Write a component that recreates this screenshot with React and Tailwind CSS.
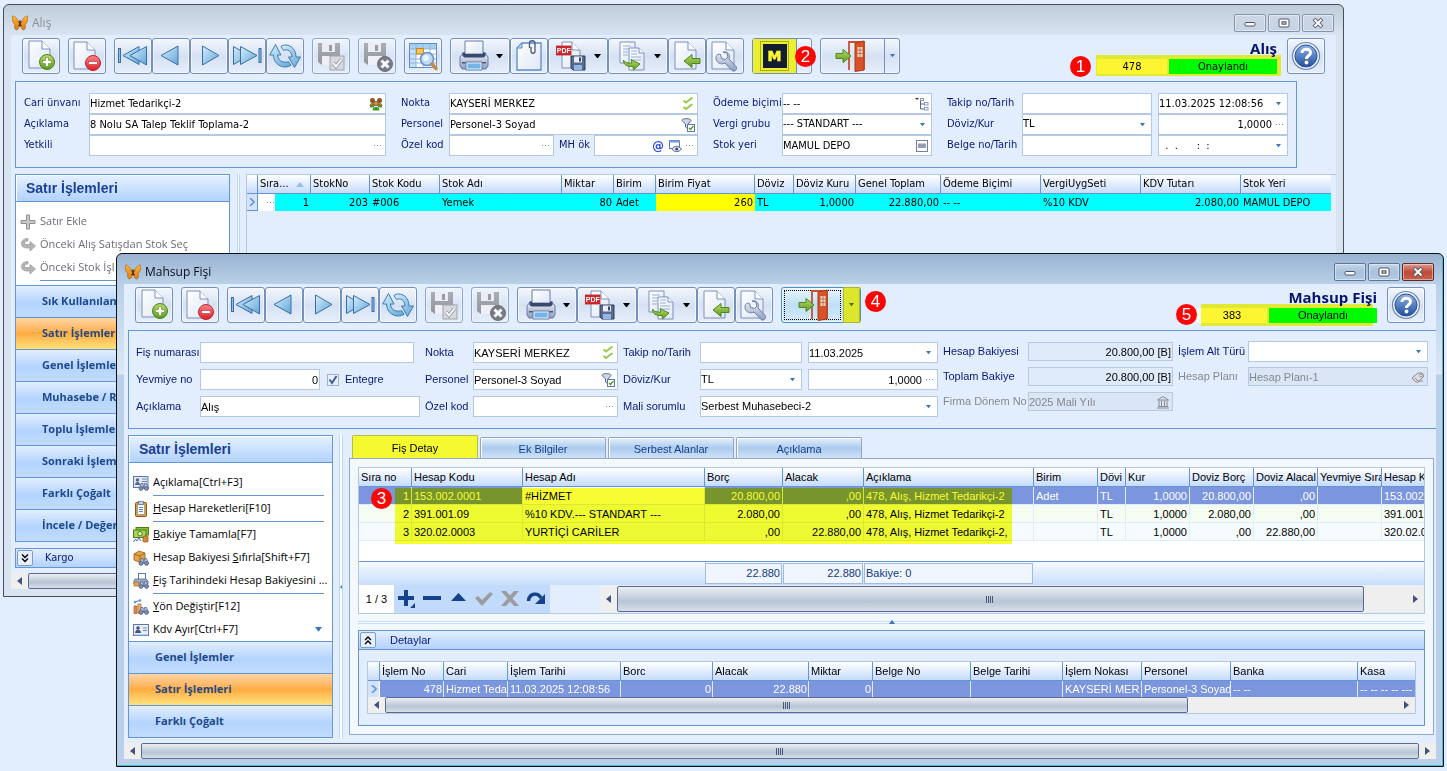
import React, { useId } from "react";

/* ---------- shared drawing helpers ---------- */

function Defs() {
  return (
    <svg className="absolute size-0" aria-hidden="true">
      <defs>
        <linearGradient id="gPage" x1="0" y1="0" x2="1" y2="1">
          <stop offset="0" stopColor="#ffffff" />
          <stop offset="1" stopColor="#dde7f6" />
        </linearGradient>
        <linearGradient id="gNav" x1="0" y1="0" x2="1" y2="1">
          <stop offset="0" stopColor="#d8eefb" />
          <stop offset="1" stopColor="#5fa6d8" />
        </linearGradient>
        <linearGradient id="gGreen" x1="0" y1="0" x2="0" y2="1">
          <stop offset="0" stopColor="#b8dc6c" />
          <stop offset="1" stopColor="#5d9a1c" />
        </linearGradient>
        <linearGradient id="gRed" x1="0" y1="0" x2="0" y2="1">
          <stop offset="0" stopColor="#f9868a" />
          <stop offset="1" stopColor="#dd1f28" />
        </linearGradient>
        <linearGradient id="gHelp" x1="0" y1="0" x2="0" y2="1">
          <stop offset="0" stopColor="#8fb2e6" />
          <stop offset="1" stopColor="#20509e" />
        </linearGradient>
        <linearGradient id="gSteel" x1="0" y1="0" x2="0" y2="1">
          <stop offset="0" stopColor="#eef2f9" />
          <stop offset="1" stopColor="#8d9cbd" />
        </linearGradient>
        <linearGradient id="gGray" x1="0" y1="0" x2="0" y2="1">
          <stop offset="0" stopColor="#99999d" />
          <stop offset="1" stopColor="#77777b" />
        </linearGradient>
        <linearGradient id="gOrange" x1="0" y1="0" x2="0" y2="1">
          <stop offset="0" stopColor="#ffb52e" />
          <stop offset="1" stopColor="#e07c10" />
        </linearGradient>
      </defs>
    </svg>
  );
}

function Icon({ children, size = "size-8", box = "0 0 32 32" }) {
  return (
    <svg viewBox={box} className={`${size} shrink-0`} fill="none" aria-hidden="true">
      {children}
    </svg>
  );
}

const Page = ({ x = 4, y = 1, w = 21, h = 27 }) => (
  <>
    <path
      d={`M${x} ${y}h${w - 8}l8 8v${h - 8}h-${w}z`}
      fill="url(#gPage)"
      stroke="#7d90bd"
      strokeWidth="1"
    />
    <path d={`M${x + w - 8} ${y}v8h8`} fill="#fff" stroke="#7d90bd" strokeWidth="1" />
  </>
);

const GreenArrow = ({ d }) => (
  <path d={d} fill="url(#gGreen)" stroke="#4f8420" strokeWidth="1" strokeLinejoin="round" />
);

const icons = {
  add: (
    <Icon>
      <Page />
      <circle cx="22" cy="22" r="7.5" fill="url(#gGreen)" stroke="#4d801a" />
      <path d="M20.5 17.5h3v3h3v3h-3v3h-3v-3h-3v-3h3z" fill="#fff" stroke="#5d8c28" strokeWidth=".6" />
    </Icon>
  ),
  remove: (
    <Icon>
      <Page x={3} y={2} />
      <circle cx="22" cy="23" r="7.5" fill="url(#gRed)" stroke="#c0242c" />
      <rect x="17.5" y="21.5" width="9" height="3" fill="#fff" stroke="#c02a2e" strokeWidth=".6" />
    </Icon>
  ),
  first: (
    <Icon>
      <rect x="1.5" y="8.5" width="2" height="14" fill="#8cc0e4" stroke="#3c6ea6" />
      <path d="M6 15.5 22 6.5v18z" fill="url(#gNav)" stroke="#3c6ea6" />
      <path d="M13 15.5 29.500 6.500v18.500z" fill="url(#gNav)" stroke="#3c6ea6" />
    </Icon>
  ),
  prev: (
    <Icon>
      <path d="M6 15.500 23 6v19z" fill="url(#gNav)" stroke="#3c6ea6" />
    </Icon>
  ),
  next: (
    <Icon>
      <path d="M26 15.500 9.500 6v19z" fill="url(#gNav)" stroke="#3c6ea6" />
    </Icon>
  ),
  last: (
    <Icon>
      <path d="M18 15.500 2.500 6.500v18z" fill="url(#gNav)" stroke="#3c6ea6" />
      <path d="M26 15.500 9.500 6.500v18z" fill="url(#gNav)" stroke="#3c6ea6" />
      <rect x="28" y="8.500" width="2" height="14" fill="#8cc0e4" stroke="#3c6ea6" />
    </Icon>
  ),
  refresh: (
    <Icon>
      <path
        d="M8.500 15H12L6.500 4.500 .700 15H4.500C4.500 22 10 27 16 27c2.500 0 4.500-.700 6-1.800L19.500 21.500C17 23 9 22.500 8.500 15z"
        fill="url(#gNav)"
        stroke="#3f7cb0"
        strokeLinejoin="round"
      />
      <path
        d="M12 6.500C13.500 5.300 15 5 16.500 5c6 0 10.500 5 10.500 12h4.500L25.500 27.500 19.500 17H23c0-6-5-8.500-8.500-6.500z"
        fill="url(#gNav)"
        stroke="#3f7cb0"
        strokeLinejoin="round"
      />
    </Icon>
  ),
  save: (
    <Icon>
      <path d="M3 3h22v22H7l-4-3z" fill="url(#gGray)" />
      <rect x="7" y="3" width="13" height="9" fill="#ededf0" />
      <rect x="14" y="5" width="3" height="6" fill="#828286" />
      <rect x="7" y="16" width="14" height="9" fill="#f2f2f4" />
      <rect x="15" y="16" width="14" height="14" fill="#d2d3d6" stroke="#8d8d92" />
      <path d="m18 23 3 3.500 5.500-7" stroke="#77777b" strokeWidth="3.600" />
      <path d="m18 23 3 3.500 5.500-7" stroke="#fff" strokeWidth="2" />
    </Icon>
  ),
  cancel: (
    <Icon>
      <path d="M3 3h22v22H7l-4-3z" fill="url(#gGray)" />
      <rect x="7" y="3" width="13" height="9" fill="#ededf0" />
      <rect x="14" y="5" width="3" height="6" fill="#828286" />
      <rect x="7" y="16" width="14" height="9" fill="#f2f2f4" />
      <circle cx="24" cy="24" r="7.500" fill="#55565a" stroke="#4a4a4e" />
      <path d="m20.500 20.500 7 7m0-7-7 7" stroke="#fff" strokeWidth="3" />
    </Icon>
  ),
  sheet: (
    <Icon>
      <rect x="2.500" y="3.500" width="27" height="24" fill="#fff" stroke="#5f8fca" />
      <path d="M3 4h26v5H3z" fill="#a5d0ee" />
      <path d="M3 9h6v18H3z" fill="#c3e0f5" />
      <path d="M3 9h26M3 14h26M3 19h26M3 23h26M9 4v23M16 4v23M23 4v23" stroke="#8fb4dd" />
      <rect x="9.500" y="8.500" width="7" height="5.500" fill="#f8c45a" stroke="#c98a1c" />
      <circle cx="20" cy="19" r="6.500" fill="#b9daf8" fillOpacity=".9" stroke="#6f8fc8" strokeWidth="1.600" />
      <circle cx="19" cy="18" r="3" fill="#e9f5ff" />
      <path d="m25 24 4 4.500" stroke="#c58a4a" strokeWidth="3.400" strokeLinecap="round" />
    </Icon>
  ),
  print: (
    <Icon>
      <path d="M5 13h22l3 4v9l-2 3H4l-2-3v-9z" fill="url(#gSteel)" stroke="#6b7ca6" />
      <path d="M7 1h18v13H7z" fill="url(#gPage)" stroke="#6b7ca6" />
      <path d="M4.500 12.500H7V14h18v-1.500h2.500V16l-2 1.500h-19l-2-1.500z" fill="#39476f" />
      <path d="M4 22h24v1.500H4z" fill="#4a587c" />
      <path d="M8 22h16v8H8z" fill="#eaf6ff" stroke="#6b7ca6" />
      <path d="M9.500 23.500h13v5h-13z" fill="#72b6e8" />
    </Icon>
  ),
  clip: (
    <Icon>
      <path d="M9 3h19v27H4V8z" fill="url(#gPage)" stroke="#5c8bc8" strokeWidth="1.300" />
      <path d="M4 8h5V3z" fill="#bcd8f2" stroke="#5c8bc8" />
      <path d="M18 7v4c0 3 4 3 4 0V3c0-3-5.500-3-5.500 0v5" stroke="#4b5878" strokeWidth="1.300" />
    </Icon>
  ),
  pdf: (
    <Icon>
      <Page x={6} y={2} w={18} h={26} />
      <rect x="0" y="6" width="15" height="9" fill="#d3262c" stroke="#b3262c" strokeWidth=".800" />
      <text x="0.800" y="13.200" fontSize="7" fontWeight="700" fill="#fff" fontFamily="Liberation Sans">
        PDF
      </text>
      <path d="M15 16h14v14H17l-2-2z" fill="#5b6a8e" stroke="#2f3b5b" />
      <rect x="18" y="16.500" width="8" height="6" fill="#e8eef8" />
      <rect x="23" y="17.500" width="2" height="4" fill="#39456a" />
      <rect x="18" y="25" width="8" height="5" fill="#8fb8e6" />
    </Icon>
  ),
  copy: (
    <Icon>
      <path d="M4 2h15v21H4z" fill="url(#gPage)" stroke="#7d90bd" />
      <path d="M7 6h8M7 9h6M7 12h5M7 15h5" stroke="#9aaedb" />
      <path d="M13 8h10l5 5v17H13z" fill="url(#gPage)" stroke="#7d90bd" />
      <path d="M23 8v5h5" fill="#fff" stroke="#7d90bd" />
      <path d="M15 11h6M15 14h6M15 17h10M15 20h10" stroke="#9aaedb" />
      <GreenArrow d="M7.500 20c1 2.500 4 3.500 8.500 3l-1-3.500L24 24l-6.500 6-.500-3.500C11 27 7 24.500 7.500 20z" />
    </Icon>
  ),
  fetch: (
    <Icon>
      <Page x={4} y={2} w={21} h={27} />
      <GreenArrow d="m13 21 8-6.500v4h8v5h-8v4z" />
    </Icon>
  ),
  wrench: (
    <Icon>
      <Page x={3} y={2} w={22} h={27} />
      <path
        d="M14 12l4 1 1 4-2.500 2.500-4-1-1-4C8 13 6 17 7.500 20.500 9.500 24 13 24.500 16 23l7 7.500c2.500 2 6-1.500 4-4L20 19c1.500-4-1-8-6-7z"
        fill="url(#gSteel)"
        stroke="#6b7aa0"
        strokeWidth="1"
        strokeLinejoin="round"
      />
    </Icon>
  ),
  mark: (
    <Icon>
      <rect x="1.500" y="1.500" width="28" height="29" stroke="#a9ae18" />
      <rect x="4" y="4" width="24" height="24" fill="#141c30" />
      <text x="15.500" y="21" textAnchor="middle" fontSize="14" fontWeight="700" fill="#fbf630" stroke="#fbf630" strokeWidth=".6" fontFamily="DejaVu Sans">
        M
      </text>
    </Icon>
  ),
  exit: (
    <Icon>
      <path d="M15 30V2h15v28" stroke="#c8502e" strokeWidth="1.800" />
      <path d="M21 3 30 1v29l-9 1.500z" fill="#d9532a" stroke="#a83a18" />
      <path d="M23.500 7h5v10h-5z" fill="#f3d8c2" />
      <path d="M26 7v10M23.500 10h5M23.500 13.500h5" stroke="#a5532e" strokeWidth=".700" />
      <GreenArrow d="M2 13.500h7v-4l8 6.500-8 6.500v-4H2z" />
    </Icon>
  ),
  help: (
    <Icon>
      <circle cx="16" cy="16" r="13.500" fill="#e9f1fc" stroke="#6f86b6" strokeWidth="1.200" />
      <circle cx="16" cy="16" r="11" fill="url(#gHelp)" stroke="#2c5396" />
      <path d="M12 13c0-5 8.500-5 8.500-.500 0 3.500-4 3-4 6.500" stroke="#fff" strokeWidth="3" />
      <circle cx="16.500" cy="22.500" r="1.900" fill="#fff" />
    </Icon>
  ),
};

const Butterfly = () => (
  <Icon size="size-4" box="0 0 16 16">
    <path d="M7.500 8.500C6 4 3 1 .300 1 0 5 1 8.500 3 9.300 2 11.500 2.500 14.500 4.500 15 6.500 14.500 7.300 12 7.500 9z" fill="url(#gOrange)" stroke="#9a5210" strokeWidth=".500" />
    <path d="M8.500 8.500C10 4 13 1 15.700 1 16 5 15 8.500 13 9.300c1 2.200.500 5.200-1.500 5.700-2-.500-2.800-3-3-6z" fill="url(#gOrange)" stroke="#9a5210" strokeWidth=".500" />
    <path d="M8 5.500v6" stroke="#3a2614" strokeWidth="1.600" />
    <path d="m6 6.500 2 2 2-2M6 11l2-2 2 2" stroke="#5a3614" strokeWidth=".800" />
  </Icon>
);

const Bino = () => (
  <>
    <path d="M6.500 13.500 8 8.500h2l.500 5zM11 13.500l.500-5h2l2 5z" fill="#b9c3d8" stroke="#55658c" strokeWidth=".800" />
    <circle cx="8" cy="13.500" r="1.900" fill="#8193b8" stroke="#44537a" strokeWidth=".700" />
    <circle cx="13.500" cy="13.500" r="1.900" fill="#8193b8" stroke="#44537a" strokeWidth=".700" />
  </>
);

const small = {
  plus: (
    <Icon size="size-4" box="0 0 16 16">
      <path d="M6.500 1h3v5.500H15v3H9.500V15h-3V9.500H1v-3h5.500z" fill="#c9c9c9" stroke="#8f8f8f" />
    </Icon>
  ),
  redo: (
    <Icon size="size-4" box="0 0 16 16">
      <path d="M8 1.500C-.500 1.500-.500 11 6.500 11H10v3l5.500-5L10 4.500V7.500H7C3.500 7.500 3.500 4.500 8 4z" fill="#b4b4b4" stroke="#9a9a9a" strokeWidth=".700" />
    </Icon>
  ),
  cardFind: (
    <Icon size="size-4" box="0 0 16 16">
      <rect x=".500" y="1.500" width="14.500" height="11" fill="#dfe7f4" stroke="#5a79b0" />
      <circle cx="4.500" cy="5" r="1.700" fill="#55658c" />
      <path d="M2 10c0-4 5-4 5 0z" fill="#55658c" />
      <path d="M9 4h5M9 6.500h5" stroke="#6f86b6" />
      <Bino />
    </Icon>
  ),
  clipboard: (
    <Icon size="size-4" box="0 0 16 16">
      <rect x="2.500" y="1.500" width="11" height="14" rx="1" fill="#e09a2c" stroke="#8d5a12" />
      <rect x="4.500" y="3.500" width="7" height="10" fill="#fff" stroke="#7d93bd" strokeWidth=".700" />
      <rect x="5.500" y=".500" width="5" height="3" fill="#c9d2e4" stroke="#596a92" strokeWidth=".700" />
      <path d="M6 6.500h4M6 8.500h4M6 10.500h4" stroke="#5e86c6" />
    </Icon>
  ),
  money: (
    <Icon size="size-4" box="0 0 16 16">
      <rect x="3" y=".500" width="12.500" height="7.500" fill="#8cbf3a" stroke="#4b7c18" />
      <rect x=".500" y="3" width="12.500" height="7.500" fill="#a9d455" stroke="#4b7c18" />
      <circle cx="7" cy="6.700" r="2.200" fill="#e6f5c2" stroke="#4b7c18" />
      <path d="m.500 15 2-3 1.500 2 2-3 2 3" stroke="#3c74c0" />
      <rect x="10" y="9" width="5" height="6" rx="1" fill="#d98a3c" stroke="#8d4e16" strokeWidth=".700" />
    </Icon>
  ),
  box: (
    <Icon size="size-4" box="0 0 16 16">
      <path d="m1 4 5-3 6 2v6l-5 3.500L1 10z" fill="#e3a443" stroke="#96601a" strokeWidth=".800" />
      <path d="m1 4 6 2v6.500M7 6l5-3" stroke="#96601a" strokeWidth=".800" />
      <Bino />
    </Icon>
  ),
  printFind: (
    <Icon size="size-4" box="0 0 16 16">
      <rect x="5.500" y=".500" width="7" height="6" fill="#fff" stroke="#5a79b0" />
      <path d="M2 6h11l2 2v3H1V7.500z" fill="#9fb0d2" stroke="#55658c" strokeWidth=".800" />
      <rect x="1" y="9" width="5" height="4" fill="#e3a05a" stroke="#96601a" strokeWidth=".600" />
      <Bino />
    </Icon>
  ),
  chart: (
    <Icon size="size-4" box="0 0 16 16">
      <path d="m2 3 3-1 2-1" stroke="#3c74c0" />
      <circle cx="2" cy="3" r="1.300" fill="#5e9ae0" />
      <circle cx="7" cy="1.500" r="1.300" fill="#5e9ae0" />
      <rect x="1" y="7" width="3" height="7.500" fill="#e08a4a" stroke="#96501a" strokeWidth=".600" />
      <rect x="5" y="5" width="3" height="9.500" fill="#eeb27c" stroke="#96501a" strokeWidth=".600" />
      <Bino />
    </Icon>
  ),
  card: (
    <Icon size="size-4" box="0 0 16 16">
      <rect x=".500" y="2.500" width="15" height="11" fill="#e8effa" stroke="#5a79b0" />
      <circle cx="5" cy="6" r="1.800" fill="#44537a" />
      <path d="M2 11c0-4.500 6-4.500 6 0z" fill="#44537a" />
      <path d="M10 6h4M10 8.500h4" stroke="#6f86b6" />
      <path d="M1 13h14" stroke="#88aee6" />
    </Icon>
  ),
  people: (
    <Icon size="size-3.5" box="0 0 14 14">
      <circle cx="3.500" cy="3.500" r="2.500" fill="#8a5426" />
      <circle cx="10.500" cy="3.500" r="2.500" fill="#8a5426" />
      <path d="M.500 9c0-4 6-4 6 0zM7.500 9c0-4 6-4 6 0z" fill="#a8702e" />
      <path d="M1 8.500h4v2H1zM9 8.500h4v2H9z" fill="#3f9a2c" />
      <circle cx="7" cy="6.500" r="2.200" fill="#c8925a" stroke="#7d4a1c" strokeWidth=".700" />
      <path d="M3.500 13.500c0-5 7-5 7 0z" fill="#3f9a2c" />
    </Icon>
  ),
  checks: (
    <Icon size="size-3.5" box="0 0 14 14">
      <path d="m2.500 3.500 2.500 2 6.500-5M2.500 10l2.500 2 6.500-5" stroke="#9ccb4a" strokeWidth="2" />
    </Icon>
  ),
  filter: (
    <Icon size="size-3.5" box="0 0 14 14">
      <path d="M1 2.500c0-2.500 9-2.500 9 0L7 6v5L4.500 9V6z" fill="#cfd6e4" stroke="#5d6a88" />
      <rect x="6.500" y="6.500" width="7" height="7" fill="#fff" stroke="#5a79b0" />
      <path d="m8 10 1.500 1.500L12.500 8" stroke="#4a9a20" strokeWidth="1.300" />
    </Icon>
  ),
  tree: (
    <Icon size="size-3.5" box="0 0 14 14">
      <path d="M0 1h4L2 3z" fill="#333" />
      <path d="M5.500 3v9H9M5.500 7H9M5.500 3.500h1" stroke="#59657f" />
      <rect x="5.500" y="1.500" width="3" height="2" fill="#fff" stroke="#8d9ac0" />
      <rect x="9.500" y="5.500" width="3.500" height="2.500" fill="#fff" stroke="#8d9ac0" />
      <rect x="9.500" y="10.500" width="3.500" height="2.500" fill="#fff" stroke="#8d9ac0" />
    </Icon>
  ),
  barcode: (
    <Icon size="size-3.5" box="0 0 14 14">
      <rect x="1.500" y="1.500" width="11" height="11" fill="#fff" stroke="#6f80a8" />
      <path d="M4 4.500v4.500M6 4.500v4.500M8 4.500v4.500M10 4.500v4.500" stroke="#333c5c" />
    </Icon>
  ),
  windowEye: (
    <Icon size="size-3.5" box="0 0 14 14">
      <rect x="1.500" y="1.500" width="10" height="8" fill="#fff" stroke="#5a79b0" />
      <path d="M1 1h11v2.500H1z" fill="#6f97d8" />
      <path d="M4 10c2-3.500 7-3.500 9.500 0-2.500 3.500-7.500 3.500-9.500 0z" fill="#e6ebf4" stroke="#55658c" />
      <circle cx="8.700" cy="10" r="1.500" fill="#39456a" />
    </Icon>
  ),
  bank: (
    <Icon size="size-3.5" box="0 0 14 14">
      <path d="m1.500 5 5.500-3.500L12.500 5zM2 11.500h10M1 13h12M3 5.500v6M5.500 5.500v6M8.500 5.500v6M11 5.500v6" stroke="#8a8c92" />
    </Icon>
  ),
  tag: (
    <Icon size="size-3.5" box="0 0 14 14">
      <path d="m1 8 6-5h4l2 3-6 6.500-3-1z" fill="#dcdde0" stroke="#8a8c92" />
      <circle cx="10" cy="5.500" r="1.300" fill="#fff" stroke="#8a8c92" />
      <path d="m4 8 3 3 5 0" stroke="#8a8c92" />
    </Icon>
  ),
};

const Caret = ({ cls = "text-[#3f74b8]", size = "w-[5px]" }) => (
  <svg viewBox="0 0 6 4" className={`${size} ${cls} shrink-0`} aria-hidden="true">
    <path d="M0 0h6L3 4z" fill="currentColor" />
  </svg>
);

const Dots = () => (
  <svg viewBox="0 0 8 2" className="h-0.5 w-2 shrink-0 text-[#7c8cac]" aria-hidden="true">
    <path d="M0 0h1v1H0zM3 0h1v1H3zM6 0h1v1H6z" fill="currentColor" />
  </svg>
);

const EdgeDots = () => (
  <span className="-mr-[3px]">
    <Dots />
  </span>
);

/* ---------- window parts ---------- */

function Callout({ n, className }) {
  return (
    <span
      className={`absolute z-10 flex size-[21px] items-center justify-center rounded-full bg-[#fb0505] font-['Liberation_Sans',sans-serif] text-[17px] leading-none text-white ${className}`}
    >
      {n}
    </span>
  );
}

const captionBase = "flex h-[18px] w-8 items-center justify-center rounded-[2px] border shadow-[inset_0_0_0_1px_rgba(255,255,255,0.45)]";

function Caption({ title, active }) {
  const plain = active
    ? "border-[#5d7796] bg-linear-to-b from-[#c3d5e9] via-[#a9c1dc] to-[#b4cbe4]"
    : "border-[#8493ab] bg-linear-to-b from-[#cdd8e6] to-[#c6d3e2]";
  const close = active ? "border-[#5e2b2b] bg-linear-to-b from-[#dd9d90] via-[#bf4a36] to-[#c8614d]" : plain;
  return (
    <header className="flex h-[30px] items-center gap-1 pt-1.5 pr-0.5 pl-px">
      <Butterfly />
      <h2 className={`flex-1 truncate font-['Open_Sans',sans-serif] text-xs ${active ? "text-[#0c0c14]" : "text-[#8c8f98]"}`}>
        {title}
      </h2>
      <div className="flex gap-0.5">
        <button type="button" aria-label="Simge durumuna küçült" className={`${captionBase} ${plain}`}>
          <svg viewBox="0 0 12 10" className="h-2.5 w-3" aria-hidden="true">
            <rect x="1" y="4.500" width="10" height="3.500" rx="1" fill="#fff" stroke="#4f5668" />
          </svg>
        </button>
        <button type="button" aria-label="Ekranı kapla" className={`${captionBase} ${plain}`}>
          <svg viewBox="0 0 12 10" className="h-2.5 w-3" aria-hidden="true">
            <rect x="1" y="1" width="10" height="8" rx="1" fill="#fff" stroke="#4f5668" />
            <rect x="4" y="3.800" width="4" height="2.400" fill="#b6c8dc" stroke="#4f5668" />
          </svg>
        </button>
        <button type="button" aria-label="Kapat" className={`${captionBase} ${close}`}>
          <svg viewBox="0 0 12 10" className="h-2.5 w-3" aria-hidden="true">
            <path d="m2 1 8 8M10 1 2 9" stroke="#4f5668" strokeWidth="3.800" />
            <path d="m2.500 1.500 7 7M9.500 1.500l-7 7" stroke="#fff" strokeWidth="2" />
          </svg>
        </button>
      </div>
    </header>
  );
}

const btnFace =
  "flex h-9 shrink-0 items-center rounded-[3px] border border-[#7490bf] bg-linear-to-b from-[#f0f5fd] from-5% via-[#d5e1f3] via-50% to-[#e6eefa] shadow-[inset_0_0_0_1px_rgba(255,255,255,0.6)]";

function Tool({ icon, label, menu, disabled }) {
  return (
    <button
      type="button"
      aria-label={label}
      disabled={disabled}
      className={`${btnFace} justify-center ${menu ? "w-[60px] gap-1.5" : "w-[38px]"} ${disabled ? "opacity-75" : ""}`}
    >
      {icons[icon]}
      {menu && <Caret cls="text-black" size="w-[7px]" />}
    </button>
  );
}

function Toolbar({ extra, children, attach, exit }) {
  return (
    <div className="flex h-[39px] gap-2 pt-[3px] pr-[11px] pl-[11px]">
      <Tool icon="add" label="Yeni" />
      <Tool icon="remove" label="Sil" />
      <div className="flex">
        <Tool icon="first" label="İlk" />
        <Tool icon="prev" label="Önceki" />
        <Tool icon="next" label="Sonraki" />
        <Tool icon="last" label="Son" />
        <Tool icon="refresh" label="Yenile" />
      </div>
      <Tool icon="save" label="Kaydet" disabled />
      <Tool icon="cancel" label="Vazgeç" disabled />
      {attach && <Tool icon="sheet" label="Tablo" />}
      <div className="flex">
        <Tool icon="print" label="Yazdır" menu />
        {attach && <Tool icon="clip" label="Ekler" />}
        <Tool icon="pdf" label="PDF kaydet" menu />
        <Tool icon="copy" label="Kopyala" menu />
        <Tool icon="fetch" label="Getir" />
        <Tool icon="wrench" label="Ayarlar" />
      </div>
      {extra}
      {exit}
      <div className="min-w-0 flex-1" />
      {children}
      <button type="button" aria-label="Yardım" className={`${btnFace} w-[38px] justify-center`}>
        {icons.help}
      </button>
    </div>
  );
}

function Status({ title, no, callout, mark, calloutPos }) {
  return (
    <div className="relative mr-0.5 flex flex-col items-end text-[11px]">
      <h1 className="h-[21px] font-['Open_Sans',sans-serif] text-[15px] leading-[21px] font-bold text-[#08136e]">{title}</h1>
      <div className="flex h-[15px] gap-0.5 leading-[15px] text-black">
        <span className="w-[70px] bg-[#fff8f4] text-center">{no}</span>
        <span className="w-[108px] bg-[#00ff00] text-center">Onaylandı</span>
      </div>
      <span className={`absolute bg-[#fdfb34] mix-blend-multiply ${mark}`} />
      <Callout n={callout} className={calloutPos} />
    </div>
  );
}

const box = "flex min-w-0 items-center gap-1 border bg-white pr-1.5";
const enabledBox = "h-[21px] border-[#b4c8e2]";

function Field({ label, value = "", right, tail, kind = "input", grow = "flex-1", off, flat, hideLabel, labelW, children }) {
  const id = useId();
  const shade = off
    ? "h-[19px] border-[#b7cae4] !bg-[#dae5f5] text-[#85888f]"
    : flat
      ? "h-[19px] border-[#b7cae4] !bg-[#dfeafa] text-black !pr-0"
      : `${enabledBox} text-black`;
  return (
    <div className={`flex min-w-0 items-center ${grow}`}>
      {!hideLabel && (
        <label htmlFor={id} className={`shrink-0 whitespace-nowrap ${labelW} ${off ? "text-[#85888f]" : "text-[#0a1a78]"}`}>
          {label}
        </label>
      )}
      <div className={`${box} ${shade} flex-1 ${!tail ? "!pr-px" : ""}`}>
        {kind === "select" ? (
          <select
            id={id}
            aria-label={hideLabel ? label : undefined}
            defaultValue={value}
            disabled={off}
            className="h-full min-w-0 flex-1 appearance-none bg-transparent outline-none"
          >
            <option>{value}</option>
          </select>
        ) : (
          <input
            id={id}
            aria-label={hideLabel ? label : undefined}
            defaultValue={value}
            disabled={off}
            readOnly={flat}
            className={`h-full min-w-0 flex-1 bg-transparent outline-none ${right ? "text-right" : ""}`}
          />
        )}
        {tail}
      </div>
      {children}
    </div>
  );
}

function SideButtons({ items, active }) {
  return items.map((t) => (
    <button
      key={t}
      type="button"
      className={`block h-8 w-full truncate border-t border-[#6496d4] pl-[26px] text-left font-['Open_Sans',sans-serif] text-[11px] font-bold text-[#1f4a8a] ${
        t === active
          ? "bg-linear-to-b from-[#fdd5a4] from-0% via-[#ffac41] via-50% to-[#fde27c]"
          : "bg-linear-to-b from-[#e2eeff] from-0% via-[#b4d4fe] via-55% to-[#c2dcff]"
      }`}
    >
      {t}
    </button>
  ));
}

function Sidebar({ width, rows, muted, groups, more, bottomPad }) {
  return (
    <nav className={`${width} shrink-0 border border-[#6496d4] bg-white`}>
      <h3 className="h-[27px] border-b border-[#6496d4] bg-linear-to-b from-[#e6f1ff] to-[#b2d2fe] pl-2.5 font-['Liberation_Sans',sans-serif] text-[14px] leading-[27px] font-bold text-[#1a3f94] shadow-[inset_1px_1px_0_#fff]">
        Satır İşlemleri
      </h3>
      <ul className={`pt-2 ${bottomPad} font-['Open_Sans',sans-serif] text-[11px]`}>
        {rows.map((r, i) =>
          r === "-" ? (
            <li key={i} role="separator" className="mr-2 ml-6 flex h-[3px] items-center">
              <span className="h-px flex-1 bg-[#6496d4]" />
            </li>
          ) : (
            <li key={i}>
              <button
                type="button"
                className={`flex h-[23px] w-full items-center gap-1 pr-0.5 pl-1 text-left whitespace-nowrap ${muted ? "text-[#6a6c72]" : "text-black"}`}
              >
                {small[r.icon]}
                <span className="min-w-0 flex-1 truncate">
                  {r.pre}
                  {r.u && <u>{r.u}</u>}
                  {r.text}
                </span>
                {more && i === rows.length - 1 && (
                  <span className="mr-2">
                    <Caret size="w-[7px]" />
                  </span>
                )}
              </button>
            </li>
          ),
        )}
      </ul>
      <SideButtons items={groups} active="Satır İşlemleri" />
    </nav>
  );
}

function HScroll({ height, thumb, start = "w-[17px]" }) {
  const arrow = "flex h-full shrink-0 items-center justify-center text-[#44537c]";
  return (
    <div className={`flex min-w-0 items-stretch bg-[#efefef] ${height}`}>
      <button type="button" aria-label="Sola kaydır" className={`${arrow} ${start}`}>
        <svg viewBox="0 0 5 8" className="h-2 w-[5px]" aria-hidden="true">
          <path d="M5 0v8L0 4z" fill="currentColor" />
        </svg>
      </button>
      <div className="min-w-0 flex-1">
        <div
          className={`flex h-full items-center justify-center rounded-[2px] border border-[#5b6a92] bg-linear-to-b from-[#eceef1] from-0% via-[#b7c5d6] via-60% to-[#d8dfe8] ${thumb}`}
        >
          <svg viewBox="0 0 8 7" className="h-[7px] w-2 text-[#4a5878]" aria-hidden="true">
            <path d="M.500 0v7M2.500 0v7M4.500 0v7M6.500 0v7" stroke="currentColor" />
          </svg>
        </div>
      </div>
      <button type="button" aria-label="Sağa kaydır" className={`${arrow} w-[17px]`}>
        <svg viewBox="0 0 5 8" className="h-2 w-[5px]" aria-hidden="true">
          <path d="M0 0v8l5-4z" fill="currentColor" />
        </svg>
      </button>
    </div>
  );
}

const th =
  "h-[19px] overflow-hidden border-r border-b border-[#6496d4] bg-linear-to-b from-white to-[#c6dcfb] p-0 pl-0.5 text-left font-normal whitespace-nowrap text-black last:border-r-0";

function Head({ cols }) {
  return (
    <thead>
      <tr>
        {cols.map((c, i) => (
          <th key={i} scope="col" className={th}>
            {c}
          </th>
        ))}
      </tr>
    </thead>
  );
}

const tableCls = "w-full table-fixed border-separate border-spacing-0 text-[11px] leading-4";
const side = (t) => (/^[\d.,]*\d$/.test(t) && !/^\d{3}\.\d{2,3}/.test(t) ? "text-right" : "text-left");

/* ---------- "Alış" window ---------- */

function PurchaseWindow() {
  return (
    <section className="mt-1 mr-[103px] ml-[3px] min-w-[1341px] self-start justify-self-stretch rounded-t-md border border-[#4a4d52] bg-[#d8e4f1] bg-linear-to-b from-[#bfccd9] from-0% to-[#d8e4f1] to-[30px] px-[7px] pb-[7px] font-['DejaVu_Sans_Condensed','Noto_Sans',sans-serif] text-[11px] [grid-area:1/1]">
      <Caption title="Alış" />
      <div className="bg-[#e2edfe]">
        <Toolbar
          attach
          extra={
            <div className={`${btnFace} relative w-[60px]`}>
              <button type="button" aria-label="Mahsup fişi" className="flex h-full w-[43px] items-center justify-center bg-[#ecef31]">
                {icons.mark}
              </button>
              <span className="h-full w-px bg-[#7490bf]" />
              <Callout n="2" className="top-[7px] left-[42px]" />
            </div>
          }
          exit={
            <div className={`${btnFace} w-20`}>
              <button type="button" aria-label="Çıkış" className="flex h-full w-[63px] items-center justify-center pr-1.5">
                {icons.exit}
              </button>
              <button type="button" aria-label="Çıkış seçenekleri" className="flex h-full flex-1 items-center justify-center border-l border-[#7490bf]">
                <Caret />
              </button>
            </div>
          }
        >
          <Status title="Alış" no="478" callout="1" mark="top-[17px] -right-1 h-[21px] w-[185px]" calloutPos="top-[18px] right-[186px]" />
        </Toolbar>

        <form className="mt-[7px] mr-[39px] ml-1 flex gap-[15px] border border-[#6496d4] py-[11px] pr-2 pl-2" onSubmit={(e) => e.preventDefault()}>
          <div className="flex min-w-0 flex-1 flex-col">
            <Field label="Cari ünvanı" labelW="w-[65px]" value="Hizmet Tedarikçi-2" tail={<span className="-mr-1">{small.people}</span>} />
            <Field label="Açıklama" labelW="w-[65px]" value="8 Nolu SA Talep Teklif Toplama-2" />
            <Field label="Yetkili" labelW="w-[65px]" tail={<EdgeDots />} />
          </div>
          <div className="flex w-[297px] flex-col">
            <Field label="Nokta" labelW="w-12" value="KAYSERİ MERKEZ" tail={<span className="-mr-1">{small.checks}</span>} />
            <Field label="Personel" labelW="w-12" value="Personel-3 Soyad" tail={<span className="-mr-1">{small.filter}</span>} />
            <div className="flex gap-[5px]">
              <Field label="Özel kod" labelW="w-12" grow="w-[153px]" tail={<EdgeDots />} />
              <Field
                label="MH ök"
                labelW="w-[35px]"
                tail={
                  <>
                    <span className="text-[13px] font-bold text-[#2747d8]">@</span>
                    {small.windowEye}
                    <EdgeDots />
                  </>
                }
              />
            </div>
          </div>
          <div className="flex w-[219px] flex-col">
            <Field label="Ödeme biçimi" labelW="w-[69px]" value="-- --" tail={<span className="-mr-1">{small.tree}</span>} />
            <Field label="Vergi grubu" labelW="w-[69px]" kind="select" value="--- STANDART ---" tail={<Caret />} />
            <Field label="Stok yeri" labelW="w-[69px]" value="MAMUL DEPO" tail={<span className="-mr-1">{small.barcode}</span>} />
          </div>
          <div className="flex w-[341px] flex-col">
            <div className="flex gap-1.5">
              <Field label="Takip no/Tarih" labelW="w-[75px]" grow="w-[205px]" />
              <Field label="Tarih" hideLabel value="11.03.2025 12:08:56" tail={<Caret />} />
            </div>
            <div className="flex gap-1.5">
              <Field label="Döviz/Kur" labelW="w-[75px]" grow="w-[205px]" kind="select" value="TL" tail={<Caret />} />
              <Field label="Kur" hideLabel right value="1,0000" tail={<EdgeDots />} />
            </div>
            <div className="flex gap-1.5">
              <Field label="Belge no/Tarih" labelW="w-[75px]" grow="w-[205px]" />
              <Field label="Belge tarihi" hideLabel value="  .  .      :  :" tail={<Caret />} />
            </div>
          </div>
        </form>

        <div className="mt-1.5 flex pl-1">
          <div className="flex flex-col gap-1.5">
            <Sidebar
              width="w-[215px]"
              muted
              bottomPad="pb-[3px]"
              rows={[
                { icon: "plus", text: "Satır Ekle" },
                { icon: "redo", text: "Önceki Alış Satışdan Stok Seç" },
                { icon: "redo", text: "Önceki Stok İşl" },
                "-",
              ]}
              groups={[
                "Sık Kullanılanlar",
                "Satır İşlemleri",
                "Genel İşlemler",
                "Muhasebe / Raporlar",
                "Toplu İşlemler",
                "Sonraki İşlemler",
                "Farklı Çoğalt",
                "İncele / Değerlendir",
              ]}
            />
            <div className="flex h-5 items-center gap-3 border border-[#6496d4] bg-linear-to-b from-[#e2eeff] to-[#b2d2fe] pl-px text-[#0a1a78]">
              <button type="button" aria-label="Aç" className="flex size-4 items-center justify-center rounded-[2px] border border-[#7d9cc8] bg-[#e6effb]">
                <svg viewBox="0 0 8 9" className="h-[9px] w-2 text-black" fill="none" aria-hidden="true">
                  <path d="m1 .500 3 3 3-3M1 4.500l3 3 3-3" stroke="currentColor" strokeWidth="1.400" />
                </svg>
              </button>
              Kargo
            </div>
          </div>
          <div className="mr-1.5 ml-[7px] w-[3px] border-x border-[#bcd6fa] bg-white" />
          <div className="min-w-0 flex-1 border-t border-l border-[#b4c8e2] pr-[5px]">
            <table className={tableCls}>
              <colgroup>
                <col className="w-[11px]" />
                <col className="w-[53px]" />
                <col className="w-[59px]" />
                <col className="w-[70px]" />
                <col className="w-[122px]" />
                <col className="w-[52px]" />
                <col className="w-[42px]" />
                <col className="w-[99px]" />
                <col className="w-[39px]" />
                <col className="w-[62px]" />
                <col className="w-[85px]" />
                <col className="w-[100px]" />
                <col className="w-[100px]" />
                <col className="w-[100px]" />
                <col />
              </colgroup>
              <Head
                cols={[
                  "",
                  <span className="flex items-center justify-between pr-1.5" key="s">
                    Sıra...
                    <svg viewBox="0 0 8 5" className="h-[5px] w-2" aria-hidden="true">
                      <path d="M0 5h8L4 0z" fill="#8fc0f4" />
                    </svg>
                  </span>,
                  "StokNo",
                  "Stok Kodu",
                  "Stok Adı",
                  "Miktar",
                  "Birim",
                  "Birim Fiyat",
                  "Döviz",
                  "Döviz Kuru",
                  "Genel Toplam",
                  "Ödeme Biçimi",
                  "VergiUygSeti",
                  "KDV Tutarı",
                  "Stok Yeri",
                ]}
              />
              <tbody>
                <tr>
                  <td className="h-[17px] border-r border-b border-[#6496d4] bg-[#d2e3fb] p-0 text-center text-[#5c97dc]">
                    <svg viewBox="0 0 6 8" className="mx-auto h-2 w-1.5" fill="none" aria-hidden="true">
                      <path d="m1 0 4 4-4 4" stroke="currentColor" strokeWidth="1.600" />
                    </svg>
                  </td>
                  {["1", "203", "#006", "Yemek", "80", "Adet", "260", "TL", "1,0000", "22.880,00", "-- --", "%10 KDV", "2.080,00", "MAMUL DEPO"].map(
                    (c, i) => (
                      <td
                        key={i}
                        className={`h-[17px] overflow-hidden px-0.5 py-0 whitespace-nowrap text-black ${side(c)} ${
                          i === 6 ? "bg-[#ffff00]" : i === 0 ? "bg-linear-to-r from-white from-[17px] to-[#00ffff] to-[17px]" : "bg-[#00ffff]"
                        }`}
                      >
                        {i === 0 ? (
                          <span className="flex items-center justify-between pl-[7px]">
                            <Dots />
                            {c}
                          </span>
                        ) : (
                          c
                        )}
                      </td>
                    ),
                  )}
                </tr>
              </tbody>
            </table>
          </div>
        </div>
        <div className="pt-[5px]">
          <HScroll height="h-4" thumb="w-full" />
        </div>
      </div>
    </section>
  );
}

/* ---------- "Mahsup Fişi" window ---------- */

const ledger = [
  ["1", "153.002.0001", "#HİZMET", "20.800,00", ",00", "478, Alış, Hizmet Tedarikçi-2", "Adet", "TL", "1,0000", "20.800,00", ",00", "", "153.002"],
  ["2", "391.001.09", "%10 KDV.--- STANDART ---", "2.080,00", ",00", "478, Alış, Hizmet Tedarikçi-2", "", "TL", "1,0000", "2.080,00", ",00", "", "391.001"],
  ["3", "320.02.0003", "YURTİÇİ CARİLER", ",00", "22.880,00", "478, Alış, Hizmet Tedarikçi-2,", "", "TL", "1,0000", ",00", "22.880,00", "", "320.02.0"],
];

function LedgerGrid() {
  const rowBg = ["bg-[#7b96de] text-white", "bg-[#f5fdf3] text-black", "bg-[#f5fbff] text-black"];
  const sum = "border border-[#9fbbe2] bg-[#f0f6ff] px-px leading-[18px] text-[#123a80]";
  return (
    <div className="relative border border-[#b4c8e2] bg-white">
      <table className={tableCls}>
        <colgroup>
          <col className="w-[53px]" />
          <col className="w-[111px]" />
          <col className="w-[182px]" />
          <col className="w-[78px]" />
          <col className="w-[81px]" />
          <col className="w-[170px]" />
          <col className="w-16" />
          <col className="w-7" />
          <col className="w-16" />
          <col className="w-16" />
          <col className="w-16" />
          <col className="w-16" />
          <col />
        </colgroup>
        <Head cols={["Sıra no", "Hesap Kodu", "Hesap Adı", "Borç", "Alacak", "Açıklama", "Birim", "Dövi", "Kur", "Doviz Borç", "Doviz Alacal", "Yevmiye Sıra", "Hesap K"]} />
        <tbody>
          {ledger.map((r, i) => (
            <tr key={i}>
              {r.map((c, j) => (
                <td
                  key={j}
                  className={`h-[18px] overflow-hidden border-r border-b border-[#e0ebfc] px-0.5 py-0 whitespace-nowrap last:border-r-0 ${side(c)} ${
                    i === 0 && j === 2 ? "bg-white text-black" : rowBg[i]
                  }`}
                >
                  {c}
                </td>
              ))}
            </tr>
          ))}
        </tbody>
      </table>
      <span className="absolute top-5 left-9 h-14 w-[617px] bg-[#f7fd32] mix-blend-multiply" />
      <Callout n="3" className="top-5 left-3" />
      <div className="flex h-11 flex-col pt-5">
        <div className="flex h-6 shrink-0 gap-px border-t border-[#6496d4] bg-linear-to-b from-[#f6faff] to-[#c9defc] py-px pl-[346px] text-[11px]">
          <output className={`${sum} w-[77px] text-right`}>22.880</output>
          <output className={`${sum} w-20 text-right`}>22.880</output>
          <output className={`${sum} w-[169px]`}>Bakiye: 0</output>
        </div>
      </div>
      <div className="flex h-7 items-stretch bg-[#e2edfe]">
        <span className="flex w-[35px] items-center justify-center bg-white">1 / 3</span>
        <div className="flex w-[206px] items-center bg-linear-to-r from-[#c2dafc] from-[156px] to-[#e2edfe] to-[156px] pb-px pl-0.5">
          {[
            ["Ekle", "#15428b", "M8 1h4v6h6v4h-6v6H8v-6H2V7h6zM19 14v5h-5z"],
            ["Çıkar", "#15428b", "M1 7h18v4H1z"],
            ["Düzenle", "#15428b", "M3 12h15l-7.500-8z"],
            ["Onayla", "#9b9ca0", "M1 9l3-2 4 4 8-8 3 2L8 17z"],
            ["İptal", "#9b9ca0", "M1 2h5l4 4.500L14 2h5l-6.500 7.500L19 17h-5l-4-4.500L6 17H1l6.500-7.500z"],
          ].map(([label, color, d]) => (
            <button key={label} type="button" aria-label={label} className="flex h-full w-[26px] items-center justify-start">
              <svg viewBox="0 0 20 20" className="size-5" aria-hidden="true">
                <path d={d} fill={color} />
              </svg>
            </button>
          ))}
          <button type="button" aria-label="Yenile" className="flex h-full w-[26px] items-center justify-start">
            <svg viewBox="0 0 20 20" className="size-5" fill="none" aria-hidden="true">
              <path d="M2.500 12C3 4 12 3 15 9" stroke="#15428b" strokeWidth="3.400" />
              <path d="M19 5v10H9z" fill="#15428b" />
            </svg>
          </button>
        </div>
        <div className="min-w-0 flex-1 py-px">
          <HScroll height="h-[26px]" thumb="w-[94.5%]" />
        </div>
      </div>
    </div>
  );
}

function Details() {
  return (
    <section className="border border-[#6496d4] bg-[#e2edfe]">
      <h3 className="flex h-[19px] items-center gap-3.5 border-b border-[#6496d4] bg-linear-to-b from-[#e2eeff] to-[#b2d2fe] pl-px text-[11px] text-[#0a1a78]">
        <button type="button" aria-label="Daralt" className="flex size-4 items-center justify-center rounded-[2px] border border-[#7d9cc8] bg-[#e6effb]">
          <svg viewBox="0 0 8 9" className="h-[9px] w-2 text-black" fill="none" aria-hidden="true">
            <path d="m1 4 3-3 3 3M1 8l3-3 3 3" stroke="currentColor" strokeWidth="1.400" />
          </svg>
        </button>
        Detaylar
      </h3>
      <div className="px-2 pt-[11px] pb-[11px]">
        <div className="border border-[#b4c8e2]">
          <table className={tableCls}>
            <colgroup>
              <col className="w-3" />
              <col className="w-16" />
              <col className="w-16" />
              <col className="w-[113px]" />
              <col className="w-[92px]" />
              <col className="w-24" />
              <col className="w-16" />
              <col className="w-[98px]" />
              <col className="w-[92px]" />
              <col className="w-[79px]" />
              <col className="w-[89px]" />
              <col className="w-[127px]" />
              <col />
            </colgroup>
            <Head cols={["", "İşlem No", "Cari", "İşlem Tarihi", "Borc", "Alacak", "Miktar", "Belge No", "Belge Tarihi", "İşlem Nokası", "Personel", "Banka", "Kasa"]} />
            <tbody>
              <tr>
                <td className="h-4 border-r border-white bg-[#d2e3fb] p-0 text-[#5c97dc]">
                  <svg viewBox="0 0 6 8" className="mx-auto h-2 w-1.5" fill="none" aria-hidden="true">
                    <path d="m1 0 4 4-4 4" stroke="currentColor" strokeWidth="1.600" />
                  </svg>
                </td>
                {["478", "Hizmet Teda", "11.03.2025 12:08:56", "0", "22.880", "0", "", "", "KAYSERİ MER", "Personel-3 Soyad", "-- --", "-- -- -- -- ---"].map((c, i) => (
                  <td
                    key={i}
                    className={`h-4 overflow-hidden border-r border-[#e0ebfc] bg-[#7b96de] py-0 pr-px pl-0.5 whitespace-nowrap text-white last:border-r-0 ${side(c)}`}
                  >
                    {c}
                  </td>
                ))}
              </tr>
            </tbody>
          </table>
          <HScroll height="h-4" thumb="w-[79.3%]" />
        </div>
      </div>
    </section>
  );
}

function VoucherWindow() {
  return (
    <section className="z-10 mt-[253px] mr-[3px] mb-1 ml-[116px] min-w-[1328px] self-start rounded-t-md border border-[#0d1014] bg-[#b9cfea] bg-[linear-gradient(to_bottom,#99b3d0_0,#b9d0e8_30px,#dbe7f5_120px,#b9cfea_121px)] px-[7px] pb-[7px] font-['Liberation_Sans',sans-serif] text-[11px] shadow-[inset_-1px_-1px_0_#3fc0dc] [grid-area:1/1]">
      <Caption title="Mahsup Fişi" active />
      <div className="bg-[#e2edfe]">
        <Toolbar
          exit={
            <div className={`${btnFace} relative w-20 !border-[#4f8fc4] !from-[#e4f3fd] !via-[#bfe0f6] !to-[#d3ebfa]`}>
              <button type="button" aria-label="Çıkış" className="m-0.5 flex h-[30px] w-[58px] items-center justify-center border border-dotted border-black">
                {icons.exit}
              </button>
              <button
                type="button"
                aria-label="Çıkış seçenekleri"
                className="flex h-9 w-[17px] shrink-0 items-center justify-center border border-[#a9b728] bg-[#dbe62c]"
              >
                <Caret cls="text-[#4a6a1c]" />
              </button>
              <Callout n="4" className="top-[3px] left-[83px]" />
            </div>
          }
        >
          <Status title="Mahsup Fişi" no="383" callout="5" mark="top-[17px] right-1 h-[22px] w-[172px]" calloutPos="top-[17px] right-[180px]" />
        </Toolbar>

        <form className="mt-[7px] ml-1 flex gap-[5px] border border-r-0 border-[#6496d4] py-[11px] pr-2 pl-[7px]" onSubmit={(e) => e.preventDefault()}>
          <div className="flex w-[284px] flex-col gap-1.5">
            <Field label="Fiş numarası" labelW="w-16" grow="w-[278px]" />
            <Field label="Yevmiye no" labelW="w-16" right value="0" grow="w-[184px]" />
            <Field label="Açıklama" labelW="w-16" value="Alış" />
          </div>
          <label className="-ml-[98px] flex h-[75px] w-[93px] shrink-0 items-center gap-1.5 self-start text-[#0a1a78]">
            <input type="checkbox" defaultChecked className="peer sr-only" />
            <span className="flex size-3 items-center justify-center border border-[#9fb4d4] bg-[#e9eff8]">
              <svg viewBox="0 0 10 10" className="size-2.5" fill="none" aria-hidden="true">
                <path d="m1.500 4.500 2.500 3.500 4.500-7" stroke="#3d5f9c" strokeWidth="2" />
              </svg>
            </span>
            Entegre
          </label>
          <div className="flex w-[193px] flex-col gap-1.5">
            <Field label="Nokta" labelW="w-12" value="KAYSERİ MERKEZ" tail={<span className="-mr-1">{small.checks}</span>} />
            <Field label="Personel" labelW="w-12" value="Personel-3 Soyad" tail={<span className="-mr-1">{small.filter}</span>} />
            <Field label="Özel kod" labelW="w-12" tail={<EdgeDots />} />
          </div>
          <div className="flex w-[315px] flex-col gap-1.5">
            <div className="flex gap-1.5">
              <Field label="Takip no/Tarih" labelW="w-[77px]" grow="w-[179px]" />
              <Field label="Tarih" hideLabel value="11.03.2025" tail={<Caret />} />
            </div>
            <div className="flex gap-1.5">
              <Field label="Döviz/Kur" labelW="w-[77px]" grow="w-[179px]" kind="select" value="TL" tail={<Caret />} />
              <Field label="Kur" hideLabel right value="1,0000" tail={<EdgeDots />} />
            </div>
            <Field label="Mali sorumlu" labelW="w-[77px]" kind="select" value="Serbest Muhasebeci-2" tail={<Caret />} />
          </div>
          <div className="flex w-[230px] flex-col gap-1.5">
            <Field label="Hesap Bakiyesi" labelW="w-[85px]" flat right value="20.800,00 [B]" grow="" />
            <Field label="Toplam Bakiye" labelW="w-[85px]" flat right value="20.800,00 [B]" grow="" />
            <Field label="Firma Dönem No" labelW="w-[85px]" off value="2025 Mali Yılı" grow="" tail={<span className="-mr-1">{small.bank}</span>} />
          </div>
          <div className="flex min-w-0 flex-1 flex-col gap-1.5">
            <div className="flex h-[19px] items-center">
              <Field label="İşlem Alt Türü" labelW="w-[70px]" kind="select" value="" tail={<Caret />} />
            </div>
            <Field label="Hesap Planı" labelW="w-[70px]" off value="Hesap Planı-1" grow="" tail={<span className="-mr-1">{small.tag}</span>} />
          </div>
        </form>

        <div className="mt-1.5 flex pr-0.5 pl-1">
          <Sidebar
            width="w-[205px]"
            bottomPad=""
            more
            rows={[
              { icon: "cardFind", text: "Açıklama[Ctrl+F3]" },
              "-",
              { icon: "clipboard", u: "H", text: "esap Hareketleri[F10]" },
              "-",
              { icon: "money", u: "B", text: "akiye Tamamla[F7]" },
              { icon: "box", pre: "Hesap Bakiyesi ", u: "S", text: "ıfırla[Shift+F7]" },
              { icon: "printFind", u: "F", text: "iş Tarihindeki Hesap Bakiyesini ..." },
              "-",
              { icon: "chart", u: "Y", text: "ön Değiştir[F12]" },
              { icon: "card", text: "Kdv Ayır[Ctrl+F7]" },
            ]}
            groups={["Genel İşlemler", "Satır İşlemleri", "Farklı Çoğalt"]}
          />
          <div className="mx-1.5 flex w-1 items-center border-x border-[#bcd6fa] bg-white">
            <svg viewBox="0 0 3 6" className="h-1.5 w-[3px] text-[#3f74b8]" aria-hidden="true">
              <path d="M3 0v6L0 3z" fill="currentColor" />
            </svg>
          </div>
          <div className="flex min-w-0 flex-1 flex-col pb-[3px]">
            <div role="tablist" className="flex h-[23px] items-end gap-0.5 pl-[3px]">
              <button role="tab" aria-selected="true" type="button" className="h-full w-[126px] rounded-t-[2px] border border-b-0 border-[#b5bd4a] bg-[#f5f930] pt-0.5 text-black">
                Fiş Detay
              </button>
              {["Ek Bilgiler", "Serbest Alanlar", "Açıklama"].map((t) => (
                <button
                  key={t}
                  role="tab"
                  aria-selected="false"
                  type="button"
                  className="h-[21px] w-[126px] rounded-t-[2px] border border-b-0 border-[#8fa6cc] bg-linear-to-b from-[#e6f0fc] from-0% via-[#accbee] via-50% to-[#cfe1f6] pt-0.5 text-[#15428b] shadow-[inset_1px_1px_0_#fff]"
                >
                  {t}
                </button>
              ))}
            </div>
            <div role="tabpanel" className="flex flex-1 flex-col border border-[#93a9d0] bg-[#f3f8ff] p-2">
              <LedgerGrid />
              <div className="flex h-4 items-center">
                <div className="flex h-[3px] flex-1 items-center justify-center border-y border-[#c6dcfb] bg-white">
                  <svg viewBox="0 0 6 4" className="h-1 w-1.5 text-[#3f74b8]" aria-hidden="true">
                    <path d="M0 4h6L3 0z" fill="currentColor" />
                  </svg>
                </div>
              </div>
              <Details />
            </div>
          </div>
        </div>
        <div className="pt-[5px]">
          <HScroll height="h-4" thumb="w-full" />
        </div>
      </div>
    </section>
  );
}

export default function App() {
  return (
    <main className="grid min-h-screen grid-cols-1 items-start bg-[#e2edfe]">
      <Defs />
      <PurchaseWindow />
      <VoucherWindow />
    </main>
  );
}
